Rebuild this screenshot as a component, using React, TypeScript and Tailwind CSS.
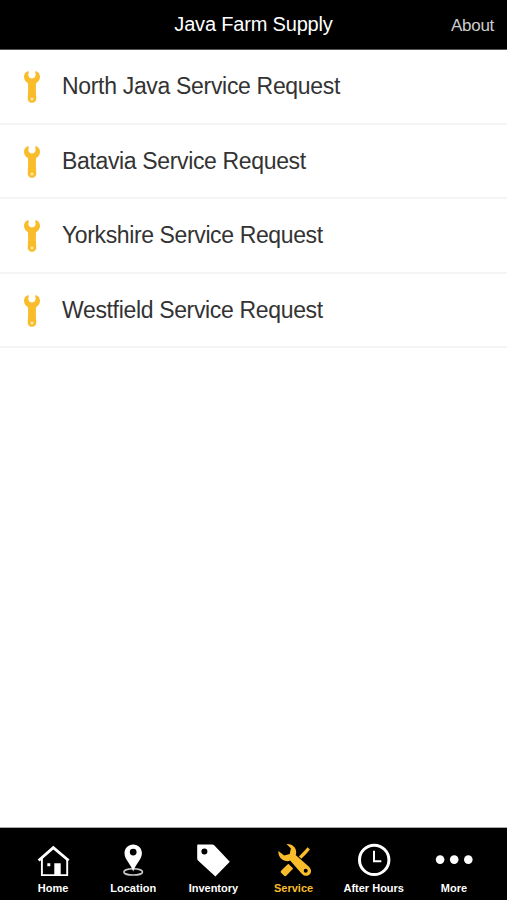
import type { ReactNode } from "react";

const requests = [
  { label: "North Java Service Request", tracking: "tracking-[-0.32px]" },
  { label: "Batavia Service Request", tracking: "tracking-[-0.35px]" },
  { label: "Yorkshire Service Request", tracking: "tracking-[-0.38px]" },
  { label: "Westfield Service Request", tracking: "tracking-[-0.34px]" },
];

function Wrench() {
  return (
    <svg width="18" height="34" viewBox="0 0 18 34" className="relative top-px shrink-0" fill="#f9bd2b">
      <path d="M5 1C2.500 2 1 4.200 1 6.800c0 2.800 1.500 5 3.900 6.300.4 4.600.2 9.500-.2 15.200C4.500 31 6.500 32.800 9 32.800s4.500-1.800 4.300-4.500c-.4-5.700-.6-10.600-.2-15.200C15.500 11.800 17 9.600 17 6.800 17 4.200 15.500 2 13 1c-.7.6-.9 1.400-.6 2.300.8 2.500-.6 5.100-3.400 5.100S4.800 5.800 5.600 3.300C5.900 2.400 5.700 1.600 5 1Z" />
      <circle cx="9" cy="29" r="1.600" fill="#fde7a8" />
    </svg>
  );
}

const tabs: { label: string; active?: boolean; icon: ReactNode }[] = [
  {
    label: "Home",
    icon: (
      <>
        <path d="M3.600 18.500 18.300 5.600 33.600 18.500" fill="none" stroke="currentColor" strokeWidth="2.800" />
        <path d="M6.900 16v17.100h25.300V16" fill="none" stroke="currentColor" strokeWidth="1.900" />
        <path d="M19.300 21.300h6.400v12h-6.400zM12.300 21.300h3v3h-3z" />
      </>
    ),
  },
  {
    label: "Location",
    icon: (
      <>
        <ellipse cx="18.200" cy="29.900" rx="9.300" ry="3.100" fill="none" stroke="#c8c8c8" strokeWidth="1.600" />
        <path
          fillRule="evenodd"
          d="M18.200 2.600c-4.900 0-8.700 3.800-8.700 8.700 0 6.200 6.200 10.700 8.700 18.200 2.500-7.500 8.700-12 8.700-18.200 0-4.900-3.800-8.700-8.700-8.700Zm0 4.100a3.400 3.400 0 1 1 0 6.800 3.400 3.400 0 0 1 0-6.800Z"
        />
      </>
    ),
  },
  {
    label: "Inventory",
    icon: (
      <path
        fillRule="evenodd"
        d="M3.200 2.400h13.900c.9 0 1.500.2 2.100.8l15.600 16.500-14.400 14.900L3 18.400c-.6-.6-.8-1.100-.8-1.900V3.400c0-.6.4-1 1-1Zm6.200 4.100a3 3 0 1 0 0 6 3 3 0 0 0 0-6Z"
      />
    ),
  },
  {
    label: "Service",
    active: true,
    icon: (
      <>
        <path d="m31.600 5.200 2.300 2.300-3.300 4.100-5.300 5.200-2.400-2.400 5.300-5.300Z" />
        <path d="m12.300 21.700 4.900 4.900-6.700 7c-.8.800-1.800.800-2.600 0l-2.600-2.600c-.8-.8-.8-1.800 0-2.600Z" />
        <path
          fillRule="evenodd"
          d="M10.500 2.100c4.600-.5 8.900 2.500 9.600 6.800.2 1.500.1 2.800-.4 4.200l13.300 11.700c2.500 2.300 2.700 5.700.6 7.700s-5.400 1.800-7.600-.6L14.100 18.600c-1.400.6-2.800.7-4.200.4-4.900-.8-7.900-4.900-7.500-9.900l5.800 4.300 5.500-1.500 1.200-5.300ZM29.700 26.700a2 2 0 1 0 0 4 2 2 0 0 0 0-4Z"
        />
      </>
    ),
  },
  {
    label: "After Hours",
    icon: (
      <g fill="none" stroke="currentColor">
        <circle cx="18.200" cy="17.900" r="14.700" strokeWidth="3" />
        <path d="M18 8.700v10.600h7.300" strokeWidth="2" />
      </g>
    ),
  },
  {
    label: "More",
    icon: (
      <>
        <circle cx="4.100" cy="17.600" r="4.300" />
        <circle cx="18.200" cy="17.600" r="4.300" />
        <circle cx="32.300" cy="17.600" r="4.300" />
      </>
    ),
  },
];

export default function App() {
  return (
    <div className="flex h-[900px] w-[507px] flex-col overflow-hidden bg-white font-['Liberation_Sans',Arial,sans-serif]">
      <header className="grid h-[50px] shrink-0 grid-cols-[1fr_auto_1fr] border-b border-[#555] bg-black text-white">
        <span />
        <h1 className="pt-[9px] text-[20px] leading-[30px] tracking-[-0.18px]">Java Farm Supply</h1>
        <button className="justify-self-end pt-[2px] pr-[13px] text-[17px] leading-none tracking-[-0.3px] text-[#ccc]">
          About
        </button>
      </header>

      <main className="flex-1">
        <ul>
          {requests.map((r) => (
            <li
              key={r.label}
              className="flex h-[74.5px] items-center gap-[21px] border-b-2 border-[#f4f4f4] pl-[23px] text-[23px] text-[#333]"
            >
              <Wrench />
              <span className={r.tracking}>{r.label}</span>
            </li>
          ))}
        </ul>
      </main>

      <nav className="grid h-[73px] shrink-0 grid-cols-6 border-t border-[#aaa] bg-black px-[13px]">
        {tabs.map((t) => (
          <button
            key={t.label}
            className={`flex flex-col items-center pt-[14px] ${t.active ? "text-[#f9bd2b]" : "text-white"}`}
          >
            <svg width="36" height="36" viewBox="0 0 36 36" fill="currentColor" className="overflow-visible">
              {t.icon}
            </svg>
            <span className="mt-[3px] text-[11px] leading-[14px] font-bold whitespace-nowrap">{t.label}</span>
          </button>
        ))}
      </nav>
    </div>
  );
}
